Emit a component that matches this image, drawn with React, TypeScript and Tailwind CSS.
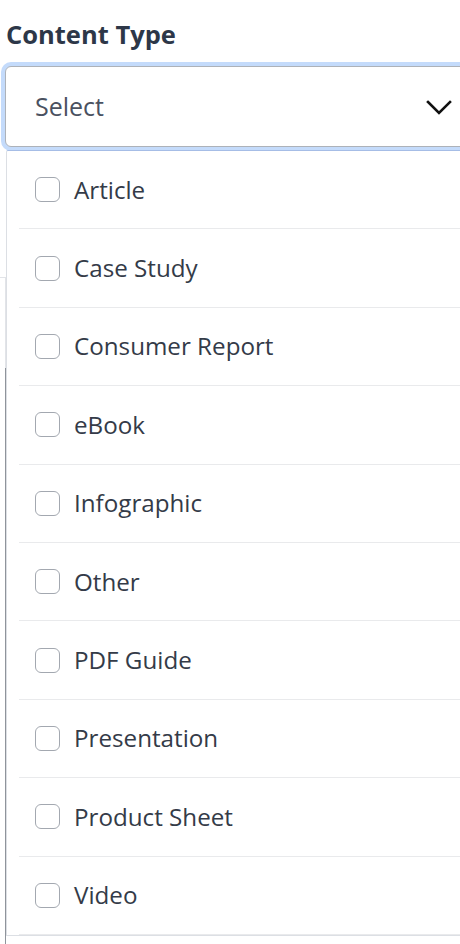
import React from "react";

const options = [
    "Article",
    "Case Study",
    "Consumer Report",
    "eBook",
    "Infographic",
    "Other",
    "PDF Guide",
    "Presentation",
    "Product Sheet",
    "Video",
];

function Chevron() {
    return (
        <svg width="26" height="16" viewBox="0 0 26 16" fill="none">
            <path d="M2 3l11 11L24 3" stroke="#111" strokeWidth="2.6" strokeLinecap="square" />
        </svg>
    );
}

export default function App() {
    return (
        <div
            className="relative w-[460px] h-[944px] overflow-hidden bg-white"
            style={{ fontFamily: '"Open Sans", "Noto Sans", sans-serif' }}
        >
            {/* page content sitting behind the open menu */}
            <div className="absolute left-[-20px] top-[277px] w-[26px] h-[200px] border-t border-r border-[#e2e4e8]" />
            <div className="absolute left-[-20px] top-[368px] w-[26px] h-[600px] border-r border-[#8f949b]" />

            <div className="relative pl-[5px] pt-[17px]">
                <h2 className="text-[25.5px] leading-[34px] font-bold text-[#2d3748] pl-[1px]">Content Type</h2>

                <div className="mt-[15px] w-[475px]">
                    <div className="h-[81px] rounded-[6px] border border-[#adb2b9] ring-4 ring-[#c4dbfb] flex items-center justify-between pl-[29px] pr-[27px] bg-white">
                        <span className="text-[25px] text-[#4a5160]">Select</span>
                        <Chevron />
                    </div>

                    <div className="mt-[3px] ml-[1px] bg-white border border-[#dcdfe4] border-t-[#a6bde6] rounded-t-[2px]">
                        {options.map((o) => (
                            <div key={o} className="ml-[12px] h-[78.4px] border-b border-[#e9eaec] flex items-center">
                                <span className="ml-[16px] w-[25px] h-[25px] rounded-[6px] border border-[#a3a8b0] bg-white shrink-0" />
                                <span className="ml-[14px] text-[24.2px] text-[#343b48]">{o}</span>
                            </div>
                        ))}
                    </div>
                </div>
            </div>
        </div>
    );
}
